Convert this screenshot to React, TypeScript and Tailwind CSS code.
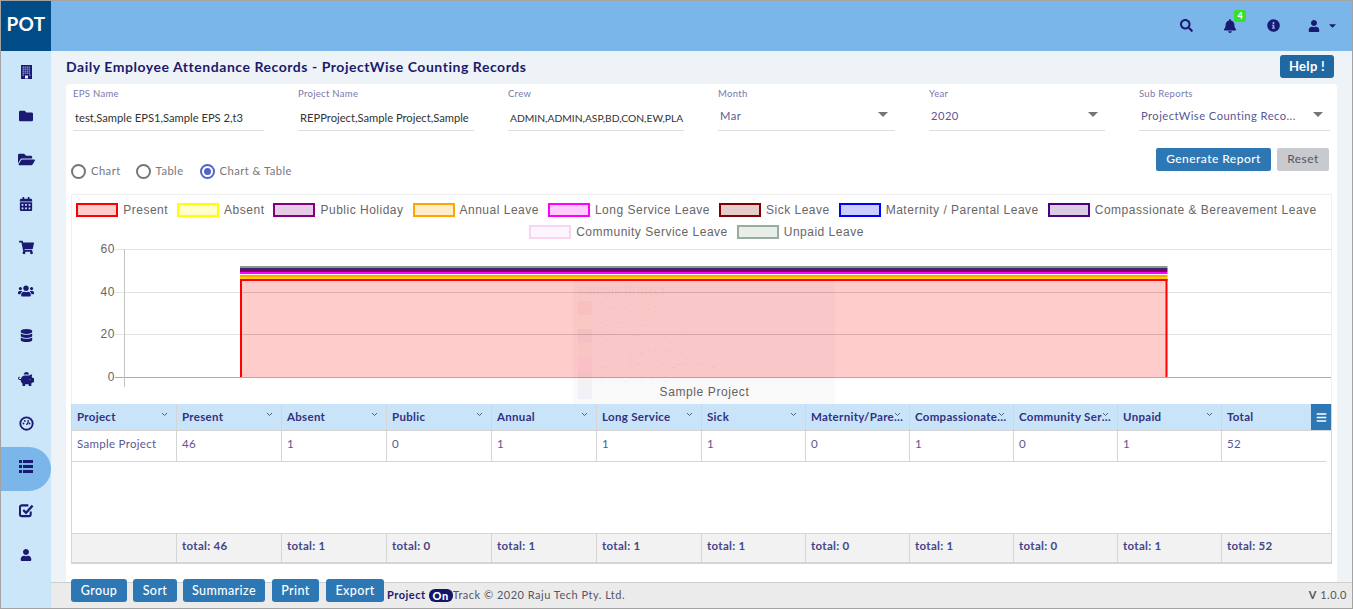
import React from 'react';
import { FaFolder, FaFolderOpen, FaCalendarAlt, FaShoppingCart, FaUsers, FaDatabase, FaPiggyBank, FaUser, FaSearch, FaBell, FaInfoCircle, FaCaretDown, FaBars } from 'react-icons/fa';

const BuildingIcon = () => (
  <svg width="11" height="14" viewBox="0 0 11 14">
    <rect width="11" height="14" fill="#1a1a72" />
    {[1.5, 3.5, 5.5, 7.5].map((y) => (
      <g key={y} fill="#8a98c8">
        <rect x="1.5" y={y} width="1.5" height="1.3" />
        <rect x="3.5" y={y} width="1.5" height="1.3" />
        <rect x="5.5" y={y} width="1.5" height="1.3" />
        <rect x="7.5" y={y} width="1.5" height="1.3" />
      </g>
    ))}
    <rect x="1.5" y="9.5" width="1.5" height="1.3" fill="#8a98c8" />
    <rect x="8" y="9.5" width="1.5" height="1.3" fill="#8a98c8" />
    <rect x="4" y="10.5" width="3" height="3" fill="#e8f2fb" />
  </svg>
);

const GaugeIcon = () => (
  <svg width="15" height="15" viewBox="0 0 16 16">
    <circle cx="8" cy="8" r="6.6" fill="none" stroke="#1a1a72" strokeWidth="2" />
    <circle cx="4.8" cy="8" r="1" fill="#1a1a72" />
    <circle cx="6.2" cy="5.2" r="1" fill="#1a1a72" />
    <circle cx="9.8" cy="5.2" r="1" fill="#1a1a72" />
    <circle cx="11.2" cy="8" r="1" fill="#1a1a72" />
    <path d="M8 9.5 L10 6.5" stroke="#1a1a72" strokeWidth="1.4" />
  </svg>
);

const CheckIcon = () => (
  <svg width="15" height="15" viewBox="0 0 16 16" fill="none">
    <path d="M12.5 9v3a2 2 0 0 1-2 2H3a2 2 0 0 1-2-2V4.5a2 2 0 0 1 2-2h7" stroke="#1a1a72" strokeWidth="2.2" />
    <path d="M4.5 7.5 L7.5 10.5 L14.5 2.8" stroke="#1a1a72" strokeWidth="2.4" />
  </svg>
);

const ListIcon = () => (
  <svg width="14" height="13" viewBox="0 0 14 13" fill="#1a1a72">
    {[0, 5, 10].map((y) => (
      <g key={y}>
        <rect x="0" y={y} width="3" height="3" />
        <rect x="4" y={y} width="10" height="3" />
      </g>
    ))}
  </svg>
);

const navItems = [
  <BuildingIcon />,
  <FaFolder size={14} />,
  <FaFolderOpen size={17} />,
  <FaCalendarAlt size={14} />,
  <FaShoppingCart size={15} />,
  <FaUsers size={16} />,
  <FaDatabase size={13} />,
  <FaPiggyBank size={16} />,
  <GaugeIcon />,
  <ListIcon />,
  <CheckIcon />,
  <FaUser size={12} />,
];

const fields = [
  { label: 'EPS Name', value: 'test,Sample EPS1,Sample EPS 2,t3', w: 'w-[191px] text-[11.2px]', col: 'w-[225px]' },
  { label: 'Project Name', value: 'REPProject,Sample Project,Sample', w: 'w-[176px] text-[11.2px]', col: 'w-[210px]' },
  { label: 'Crew', value: 'ADMIN,ADMIN,ASP,BD,CON,EW,PLA', w: 'w-[176px] text-[10.3px]', col: 'w-[210px]' },
];

const selects = [
  { label: 'Month', value: 'Mar', w: 'w-[177px]', col: 'w-[211px]' },
  { label: 'Year', value: '2020', w: 'w-[176px]', col: 'w-[210px]' },
  { label: 'Sub Reports', value: 'ProjectWise Counting Reco...', w: 'w-[191px]', col: 'w-[191px]' },
];

const legend = [
  { name: 'Present', box: 'border-[#ff0000] bg-[#ffcccc]' },
  { name: 'Absent', box: 'border-[#ffff00] bg-[#ffffcc]' },
  { name: 'Public Holiday', box: 'border-[#800080] bg-[#e6cce6]' },
  { name: 'Annual Leave', box: 'border-[#ffa500] bg-[#ffedcc]' },
  { name: 'Long Service Leave', box: 'border-[#ff00ff] bg-[#ffccff]' },
  { name: 'Sick Leave', box: 'border-[#800000] bg-[#e6cccc]' },
  { name: 'Maternity / Parental Leave', box: 'border-[#0000ff] bg-[#ccccff]' },
  { name: 'Compassionate & Bereavement Leave', box: 'border-[#4b0082] bg-[#dbcce6]' },
  { name: 'Community Service Leave', box: 'border-[#f8d5f0] bg-[#fdf6fc]' },
  { name: 'Unpaid Leave', box: 'border-[#98ae9c] bg-[#e9eeea]' },
];

const columns = [
  { title: 'Project', value: 'Sample Project', total: '' },
  { title: 'Present', value: '46', total: 'total: 46' },
  { title: 'Absent', value: '1', total: 'total: 1' },
  { title: 'Public', value: '0', total: 'total: 0' },
  { title: 'Annual', value: '1', total: 'total: 1' },
  { title: 'Long Service', value: '1', total: 'total: 1' },
  { title: 'Sick', value: '1', total: 'total: 1' },
  { title: 'Maternity/Parental', value: '0', total: 'total: 0' },
  { title: 'Compassionate & Bereavement', value: '1', total: 'total: 1' },
  { title: 'Community Service', value: '0', total: 'total: 0' },
  { title: 'Unpaid', value: '1', total: 'total: 1' },
  { title: 'Total', value: '52', total: 'total: 52' },
];

const gridCols = 'grid-cols-[105px_105px_105px_105px_105px_105px_104px_104px_104px_104px_104px_1fr]';

// top of each stacked segment, bottom one first
const stack = [
  { y: 39, c: '#ff0000' },
  { y: 37, c: '#ffd000' },
  { y: 35, c: '#ffa500' },
  { y: 32, c: '#ff00ff' },
  { y: 30, c: '#800060' },
  { y: 28, c: '#3c2278' },
  { y: 26, c: '#8a9a8e' },
];

const tooltipRows = [
  { c: '#ff0000', t: 'Present: 46' },
  { c: '#ffff00', t: 'Absent: 1' },
  { c: '#800080', t: 'Public Holiday: 0' },
  { c: '#ffa500', t: 'Annual Leave: 1' },
  { c: '#ff00ff', t: 'Long Service Leave: 1' },
  { c: '#800000', t: 'Sick Leave: 1' },
  { c: '#0000ff', t: '' },
];

const Chart = () => (
  <svg width="1259" height="164" viewBox="0 0 1259 164" className="block">
    {[9.5, 52.5, 94.5].map((y) => (
      <line key={y} x1="43" x2="1259" y1={y} y2={y} stroke="#e3e3e3" />
    ))}
    <rect x="169" y="39" width="925" height="98" fill="#ff0000" fillOpacity="0.2" />
    {[52.5, 94.5].map((y) => (
      <line key={y} x1="169" x2="1094" y1={y} y2={y} stroke="#000000" strokeOpacity="0.05" />
    ))}
    <path d="M169 137 V40 H1094.5 V137" fill="none" stroke="#ff0000" strokeWidth="2" />
    {stack.map((s) => (
      <rect key={s.y} x="168" y={s.y} width="927.5" height="2" fill={s.c} />
    ))}
    <line x1="43" x2="1259" y1="137.5" y2="137.5" stroke="#ababab" />
    <line x1="52.5" x2="52.5" y1="9" y2="147" stroke="#c4c4c4" />
    <g fontFamily="'Liberation Sans', sans-serif" fontSize="12" letterSpacing="0.6" fill="#666666" textAnchor="end">
      <text x="43" y="13">60</text>
      <text x="43" y="56">40</text>
      <text x="43" y="98">20</text>
      <text x="43" y="141">0</text>
    </g>
    <text x="632.5" y="156" textAnchor="middle" fontFamily="'Liberation Sans', sans-serif" fontSize="12" letterSpacing="0.6" fill="#666666">Sample Project</text>
    {/* tooltip caught half way through its fade */}
    <rect x="501" y="41" width="262" height="123" fill="#000000" fillOpacity="0.022" />
    <text x="506" y="55" fontFamily="'Liberation Sans', sans-serif" fontSize="12" fontWeight="700" fill="#000000" fillOpacity="0.03">Sample Project</text>
    {tooltipRows.map((r, i) => (
      <g key={r.c}>
        <rect x="506" y={61 + i * 14} width="14" height="14" fill={r.c} fillOpacity="0.03" />
        {r.t && <text x="525" y={72 + i * 14} fontFamily="'Liberation Sans', sans-serif" fontSize="12" fill="#000000" fillOpacity="0.03">{r.t}</text>}
      </g>
    ))}
  </svg>
);

export default function App() {
  return (
    <div className="flex h-[609px] w-full overflow-hidden border border-[#a3a3a3] bg-white [font-family:Lato,sans-serif]">
      <aside className="flex w-[50px] shrink-0 flex-col bg-[#cbe5f9]">
        <div className="mb-[-1px] flex h-[50px] shrink-0 items-center justify-center bg-[#004c87] pb-[3px] text-[19px] font-bold tracking-[0.3px] text-white">POT</div>
        {navItems.map((icon, i) => (
          <div key={i} className="relative flex h-[43.9px] shrink-0 items-center justify-center text-[#1a1a72]">
            {i === 9 && <div className="absolute inset-x-0 top-[2px] h-[44px] rounded-r-[22px] bg-[#7ab6e9]" />}
            <div className="relative">{icon}</div>
          </div>
        ))}
      </aside>

      <div className="flex min-w-0 flex-1 flex-col">
        <header className="relative z-10 flex h-[50px] shrink-0 items-center justify-end bg-[#7ab6e9] pb-[1px] text-[#1a1a72]">
          <FaSearch size={13} className="mr-[30px]" />
          <div className="relative mr-[30px]">
            <FaBell size={14} />
            <span className="absolute left-[11px] top-[-9px] flex h-[12px] w-[12px] items-center justify-center rounded-[2px] bg-[#39e029] text-[9px] font-bold text-white">4</span>
          </div>
          <FaInfoCircle size={13} className="mr-[28px]" />
          <FaUser size={12} className="mr-[7px]" />
          <FaCaretDown size={11} className="mr-[14px]" />
        </header>

        <main className="flex min-h-0 flex-1 flex-col bg-[#eef3f7] pl-[15px] pr-[15px]">
          <div className="flex h-[33px] shrink-0 items-start justify-between">
            <h1 className="mt-[5px] text-[14px] font-bold tracking-[0.54px] text-[#1a1a6e]">Daily Employee Attendance Records - ProjectWise Counting Records</h1>
            <button className="mr-[3px] mt-[4px] h-[23px] w-[54px] rounded-[3px] bg-[#2068a2] text-[13px] font-bold tracking-[0.3px] text-white">Help !</button>
          </div>

          <section className="flex min-h-0 flex-1 flex-col rounded-t-[4px] bg-white pl-[5px] pr-[5px]">
            <div className="flex h-[47px] shrink-0 pl-[2px]">
              {fields.map((f) => (
                <div key={f.label} className={`shrink-0 ${f.col}`}>
                  <div className="mt-[4px] text-[9.5px] leading-[12px] tracking-[0.3px] text-[#7a78ad]">{f.label}</div>
                  <div className={`mt-[7px] h-[24px] overflow-hidden whitespace-nowrap border-b border-[#dddddd] ${f.w} pl-[2px] leading-[22px] text-[#333333]`}>{f.value}</div>
                </div>
              ))}
              {selects.map((s) => (
                <div key={s.label} className={`shrink-0 ${s.col}`}>
                  <div className="mt-[4px] text-[9.5px] leading-[12px] tracking-[0.3px] text-[#7a78ad]">{s.label}</div>
                  <div className={`relative mt-[7px] h-[24px] whitespace-nowrap border-b border-[#dddddd] ${s.w} pl-[2px] text-[11.2px] leading-[18px] tracking-[0.45px] text-[#5a5894]`}>
                    {s.value}
                    <span className="absolute right-[7px] top-[5px] h-0 w-0 border-x-[5px] border-t-[5px] border-x-transparent border-t-[#757575]" />
                  </div>
                </div>
              ))}
            </div>

            <div className="flex h-[63px] shrink-0 items-center justify-between">
              <div className="flex items-center pt-[18px] text-[11.2px] tracking-[0.45px] text-[#777780]">
                <span className="h-[15px] w-[15px] rounded-full border-2 border-[#757575]" />
                <span className="ml-[5px]">Chart</span>
                <span className="ml-[15px] h-[15px] w-[15px] rounded-full border-2 border-[#757575]" />
                <span className="ml-[5px]">Table</span>
                <span className="ml-[16px] flex h-[15px] w-[15px] items-center justify-center rounded-full border-2 border-[#5464c4]">
                  <span className="h-[7px] w-[7px] rounded-full bg-[#5464c4]" />
                </span>
                <span className="ml-[5px]">Chart &amp; Table</span>
              </div>
              <div className="flex gap-[6px] pb-[6px] pr-[3px] text-[12px] tracking-[0.45px]">
                <button className="h-[23px] w-[115px] rounded-[2px] bg-[#2d78b4] pb-[2px] font-medium text-white">Generate Report</button>
                <button className="h-[23px] w-[52px] rounded-[2px] bg-[#c8cacd] pb-[2px] text-[#555566]">Reset</button>
              </div>
            </div>

            <div className="h-[210px] w-[1261px] shrink-0 border-x border-t border-[#f0f0f0]">
              <div className="-ml-[5px] mr-[5px] flex h-[45px] flex-wrap content-start justify-center pt-[4px] [font-family:'Liberation_Sans',sans-serif] text-[12px] tracking-[0.5px] text-[#666666]">
                {legend.map((l) => (
                  <div key={l.name} className="flex h-[22px] items-center whitespace-nowrap px-[4.5px]">
                    <span className={`mr-[5px] h-[14px] w-[42px] border-2 ${l.box}`} />
                    {l.name}
                  </div>
                ))}
              </div>
              <Chart />
            </div>

            <div className="flex h-[160px] w-[1261px] shrink-0 flex-col border-x border-b-2 border-[#d5d5d5] text-[11.5px] tracking-[0.3px]">
              <div className={`relative grid h-[27px] shrink-0 ${gridCols} border-b border-[#d5d5d5] bg-[#c9e4f9] font-bold text-[#32327e]`}>
                {columns.map((c) => (
                  <div key={c.title} className="relative truncate border-r border-[#d5d5d5] px-[5px] leading-[26px] last:border-r-0">
                    {c.title}
                    <svg width="7" height="5" viewBox="0 0 7 5" className="absolute right-[8px] top-[8px]">
                      <path d="M1 1 L3.5 3.5 L6 1" fill="none" stroke="#5a5a92" strokeWidth="1" />
                    </svg>
                  </div>
                ))}
                <div className="absolute right-0 top-0 flex h-[26px] w-[20px] items-center justify-center bg-[#2d78b4] text-white">
                  <FaBars size={11} />
                </div>
              </div>
              <div className={`grid h-[31px] w-[1254px] shrink-0 ${gridCols} border-b border-[#d5d5d5] text-[#5a5894]`}>
                {columns.map((c) => (
                  <div key={c.title} className="border-r border-[#d5d5d5] pl-[5px] leading-[25px] last:border-r-0">{c.value}</div>
                ))}
              </div>
              <div className="flex-1" />
              <div className={`grid h-[29px] shrink-0 ${gridCols} border-t border-[#d5d5d5] bg-[#f2f2f2] font-bold text-[#45458a]`}>
                {columns.map((c) => (
                  <div key={c.title} className="border-r border-[#d5d5d5] pl-[5px] leading-[24px] last:border-r-0">{c.total}</div>
                ))}
              </div>
            </div>
          </section>
        </main>

        <footer className="flex h-[26px] shrink-0 items-start border-t border-[#cfcfcf] bg-[#ebebeb] pl-[20px] pr-[5px]">
          <div className="relative -mt-[4px] flex gap-[6px] text-[12.5px] font-medium tracking-[0.4px] text-white">
            <button className="h-[23px] w-[56px] rounded-[3px] bg-[#2d78b4] pt-[1px]">Group</button>
            <button className="h-[23px] w-[44px] rounded-[3px] bg-[#2d78b4] pt-[1px]">Sort</button>
            <button className="h-[23px] w-[82px] rounded-[3px] bg-[#2d78b4] pt-[1px]">Summarize</button>
            <button className="ml-[1px] h-[23px] w-[47px] rounded-[3px] bg-[#2d78b4] pt-[1px]">Print</button>
            <button className="ml-[1px] h-[23px] w-[58px] rounded-[3px] bg-[#2d78b4] pt-[1px]">Export</button>
          </div>
          <div className="ml-[3px] mt-[5px] flex items-center text-[11px] leading-[14px] tracking-[0.5px] text-[#555566]">
            <span className="font-bold text-[#1a1a6e]">Project</span>
            <span className="mx-[3px] rounded-[6px] bg-[#14146a] px-[4px] text-[11px] font-black leading-[13px] text-white">On</span>
            <span className="-ml-[3px]">Track © 2020 Raju Tech Pty. Ltd.</span>
          </div>
          <div className="ml-auto mt-[5px] text-[11px] leading-[14px] tracking-[0.5px] text-[#555555]"><b>V</b> 1.0.0</div>
        </footer>
      </div>
    </div>
  );
}
